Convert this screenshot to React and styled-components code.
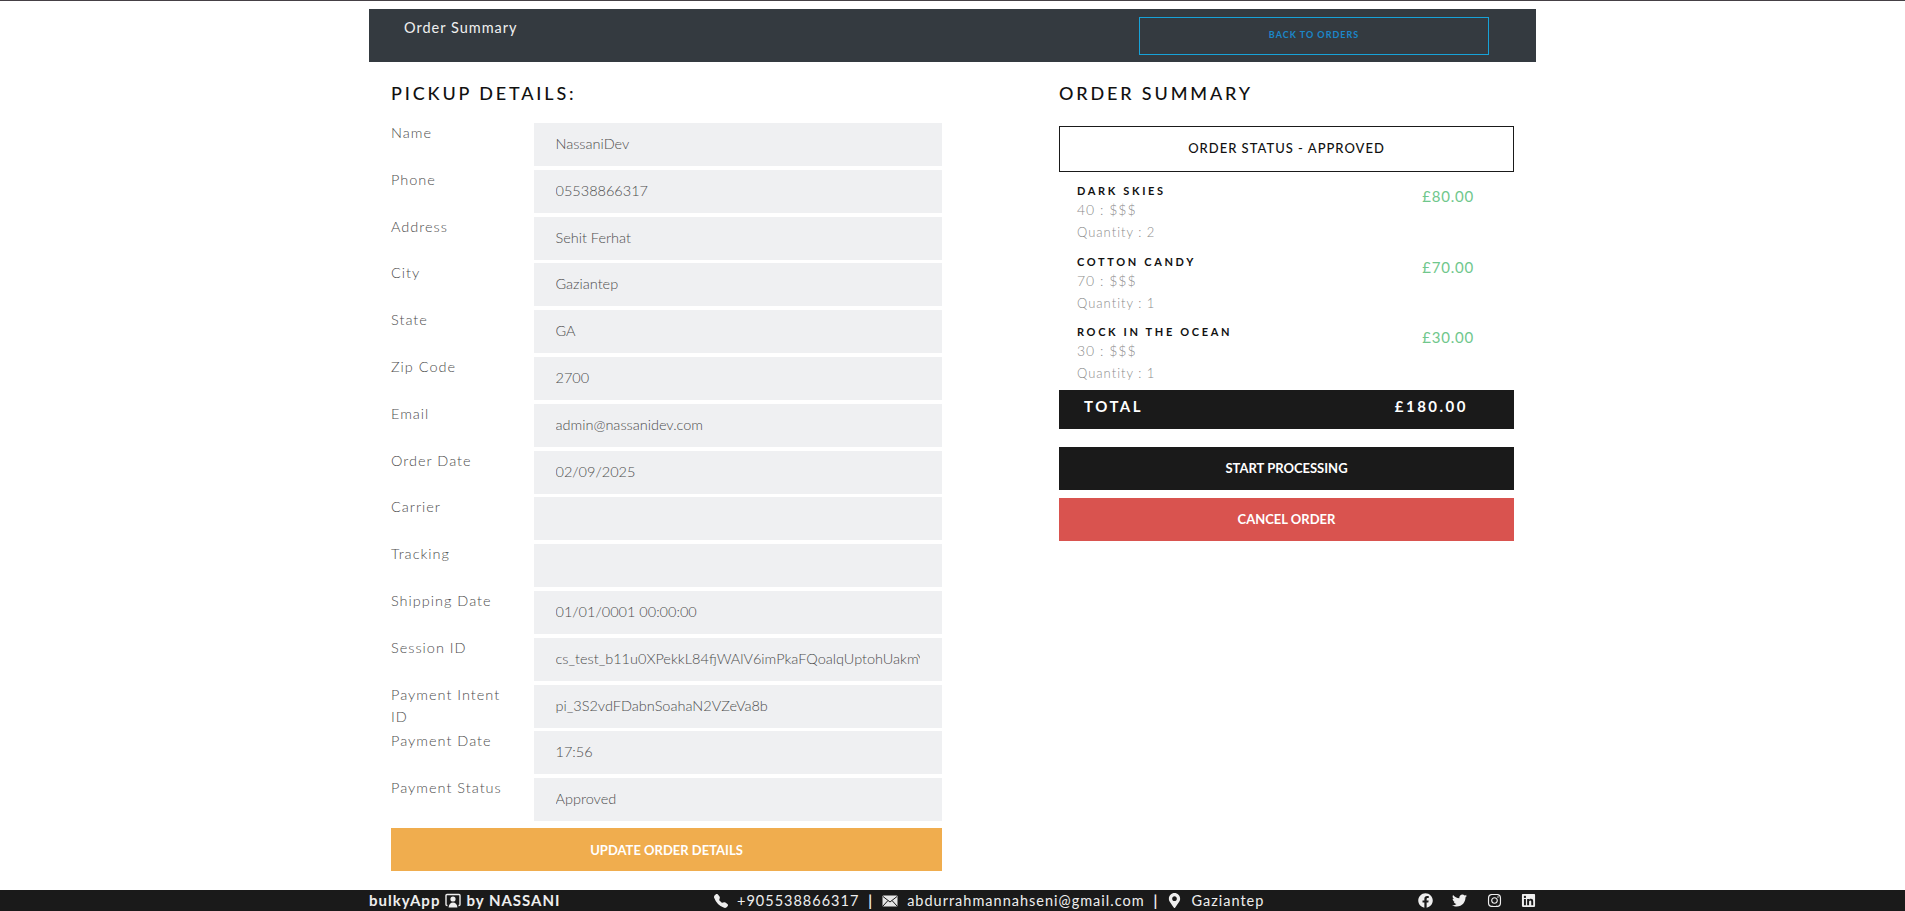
import React from 'react';
import styled, { createGlobalStyle } from 'styled-components';
import { FaFacebook, FaTwitter, FaInstagram, FaLinkedin, FaMapMarkerAlt } from 'react-icons/fa';
import { BsTelephoneFill } from 'react-icons/bs';

const GlobalStyle = createGlobalStyle`
  html, body {
    margin: 0;
    padding: 0;
    background: #ffffff;
  }
  body {
    font-family: "Lato", "Open Sans", sans-serif;
    overflow: hidden;
  }
`;

const Page = styled.div`
  display: flex;
  flex-direction: column;
  height: 911px;
  border-top: 1px solid #454045;
  box-sizing: border-box;
`;

const Container = styled.div`
  flex: 1;
  width: 1167px;
  margin: 8px auto 0;
`;

const Header = styled.div`
  display: flex;
  justify-content: space-between;
  height: 53px;
  padding: 8px 47px 7px 35px;
  box-sizing: border-box;
  background: #343a40;
`;

const HeaderTitle = styled.div`
  color: #f0f0f0;
  font-size: 14.5px;
  line-height: 21px;
  letter-spacing: 1px;
`;

const BackButton = styled.button`
  width: 350px;
  height: 38px;
  padding: 0 0 3px;
  background: transparent;
  border: 1px solid #17a2d8;
  color: #1b87c9;
  font-family: inherit;
  font-size: 9px;
  font-weight: 700;
  letter-spacing: 1px;
  text-transform: uppercase;
`;

const Columns = styled.div`
  display: grid;
  grid-template-columns: 551px 455px;
  column-gap: 117px;
  padding: 20px 0 0 22px;
`;

const SectionTitle = styled.h2`
  margin: 0;
  color: #111;
  font-size: 18px;
  font-weight: 500;
  line-height: 22px;
  letter-spacing: 2.85px;
  text-transform: uppercase;
`;

const Details = styled.div`
  display: flex;
  flex-direction: column;
  gap: 3.8px;
  margin-top: 19px;
`;

const DetailRow = styled.div`
  display: grid;
  grid-template-columns: 142.5px 1fr;
  height: 43px;
`;

const DetailLabel = styled.label`
  margin-top: -1px;
  padding-right: 15px;
  color: #4d4d4d;
  font-size: 14.5px;
  font-weight: 300;
  line-height: 22px;
  letter-spacing: 1px;
`;

const DetailInput = styled.input`
  width: 100%;
  height: 43px;
  padding: 0 22px 2px;
  box-sizing: border-box;
  background: #eff0f2;
  border: 0;
  outline: 0;
  color: #4d4d4d;
  font-family: inherit;
  font-size: 14.5px;
  font-weight: 300;
`;

const ActionButton = styled.button`
  display: block;
  width: 100%;
  height: 43px;
  border: 0;
  background: ${(p) => p.$bg};
  color: #fff;
  font-family: inherit;
  font-size: 13px;
  font-weight: 700;
  text-transform: uppercase;
`;

const UpdateButton = styled(ActionButton)`
  margin-top: 7px;
`;

const StatusBox = styled.div`
  height: 46px;
  margin-top: 22px;
  box-sizing: border-box;
  border: 1px solid #1a1a1a;
  color: #111;
  font-size: 13px;
  font-weight: 500;
  line-height: 42px;
  letter-spacing: 1px;
  text-align: center;
  text-transform: uppercase;
`;

const Items = styled.div`
  display: flex;
  flex-direction: column;
  padding: 10px 0 0 18px;
`;

const Item = styled.div`
  display: flex;
  justify-content: space-between;
  height: 70.7px;
  padding-right: 40px;

  &:last-child {
    height: 66.6px;
  }
`;

const ItemName = styled.div`
  color: #111;
  font-size: 11px;
  font-weight: 700;
  line-height: 18px;
  letter-spacing: 2.65px;
  text-transform: uppercase;
`;

const ItemMeta = styled.div`
  color: #8c8c8c;
  font-size: 14px;
  font-weight: 300;
  line-height: 20px;
  letter-spacing: 1px;
`;

const ItemQty = styled(ItemMeta)`
  margin-top: 2px;
  font-size: 13px;
`;

const ItemPrice = styled.div`
  margin-top: 3px;
  color: #70c78c;
  font-size: 15px;
  font-weight: 400;
  line-height: 22px;
  letter-spacing: 0.8px;
`;

const TotalBar = styled.div`
  display: flex;
  justify-content: space-between;
  height: 39px;
  padding: 6px 46px 0 25px;
  box-sizing: border-box;
  background: #1a1a1a;
  color: #fff;
  font-size: 15px;
  font-weight: 700;
  line-height: 20px;
  letter-spacing: 2.5px;
`;

const Actions = styled.div`
  display: flex;
  flex-direction: column;
  gap: 8px;
  margin-top: 18px;
`;

const Footer = styled.footer`
  height: 21px;
  background: #1a1a1a;
  color: #eee;
  font-size: 14.5px;
  line-height: 21px;
  letter-spacing: 1px;
`;

const FooterInner = styled.div`
  display: grid;
  grid-template-columns: 345px 1fr auto;
  width: 1167px;
  height: 21px;
  margin: 0 auto;
  overflow: hidden;
`;

const FooterGroup = styled.div`
  display: flex;
  align-items: center;
  white-space: nowrap;
`;

const Brand = styled(FooterGroup)`
  gap: 5px;
  font-size: 15px;
  font-weight: 700;
`;

const Contact = styled(FooterGroup)`
  gap: 9px;
`;

const Divider = styled.span`
  font-weight: 700;
`;

const Social = styled(FooterGroup)`
  gap: 19.5px;
  font-size: 15px;
`;

const PersonFrameIcon = () => (
  <svg width="16" height="16" viewBox="0 0 16 16" fill="none">
    <path d="M2.5 12.5H2a1 1 0 0 1-1-1V2.5a1 1 0 0 1 1-1h12a1 1 0 0 1 1 1v9a1 1 0 0 1-1 1h-.5" stroke="#eee" strokeWidth="1.4" />
    <circle cx="8" cy="6" r="2.6" fill="#eee" />
    <path d="M3.6 14.5c0-3 2-5 4.4-5s4.4 2 4.4 5z" fill="#eee" />
  </svg>
);

const MailIcon = () => (
  <svg width="16" height="12" viewBox="0 0 16 12">
    <rect x="0.5" y="0.5" width="15" height="11" rx="1" fill="#e6e6e6" />
    <path d="M1 1.5l7 5.5 7-5.5M1 11l5-5.5M15 11l-5-5.5" fill="none" stroke="#1a1a1a" strokeWidth="1" />
  </svg>
);

const details = [
  ['Name', 'NassaniDev'],
  ['Phone', '05538866317'],
  ['Address', 'Sehit Ferhat'],
  ['City', 'Gaziantep'],
  ['State', 'GA'],
  ['Zip Code', '2700'],
  ['Email', 'admin@nassanidev.com'],
  ['Order Date', '02/09/2025'],
  ['Carrier', ''],
  ['Tracking', ''],
  ['Shipping Date', '01/01/0001 00:00:00'],
  ['Session ID', 'cs_test_b11u0XPekkL84fjWAlV6imPkaFQoalqUptohUakmYbR7Ot2vK'],
  ['Payment Intent ID', 'pi_3S2vdFDabnSoahaN2VZeVa8b'],
  ['Payment Date', '17:56'],
  ['Payment Status', 'Approved'],
];

const items = [
  { name: 'Dark Skies', meta: '40 : $$$', qty: 2, price: '£80.00' },
  { name: 'Cotton Candy', meta: '70 : $$$', qty: 1, price: '£70.00' },
  { name: 'Rock in the Ocean', meta: '30 : $$$', qty: 1, price: '£30.00' },
];

function App() {
  return (
    <>
      <GlobalStyle />
      <Page>
        <Container>
          <Header>
            <HeaderTitle>Order Summary</HeaderTitle>
            <BackButton>Back to Orders</BackButton>
          </Header>
          <Columns>
            <div>
              <SectionTitle>Pickup Details:</SectionTitle>
              <Details>
                {details.map(([label, value]) => (
                  <DetailRow key={label}>
                    <DetailLabel>{label}</DetailLabel>
                    <DetailInput readOnly value={value} />
                  </DetailRow>
                ))}
              </Details>
              <UpdateButton $bg="#f0ad4e">Update Order Details</UpdateButton>
            </div>
            <div>
              <SectionTitle>Order Summary</SectionTitle>
              <StatusBox>Order Status - Approved</StatusBox>
              <Items>
                {items.map((item) => (
                  <Item key={item.name}>
                    <div>
                      <ItemName>{item.name}</ItemName>
                      <ItemMeta>{item.meta}</ItemMeta>
                      <ItemQty>Quantity : {item.qty}</ItemQty>
                    </div>
                    <ItemPrice>{item.price}</ItemPrice>
                  </Item>
                ))}
              </Items>
              <TotalBar>
                <span>TOTAL</span>
                <span>£180.00</span>
              </TotalBar>
              <Actions>
                <ActionButton $bg="#1a1a1a">Start Processing</ActionButton>
                <ActionButton $bg="#d9534f">Cancel Order</ActionButton>
              </Actions>
            </div>
          </Columns>
        </Container>
        <Footer>
          <FooterInner>
            <Brand>
              <span>bulkyApp</span>
              <PersonFrameIcon />
              <span>by NASSANI</span>
            </Brand>
            <Contact>
              <BsTelephoneFill size={14} />
              <span>+905538866317</span>
              <Divider>|</Divider>
              <MailIcon />
              <span>abdurrahmannahseni@gmail.com</span>
              <Divider>|</Divider>
              <FaMapMarkerAlt size={15} />
              <span>Gaziantep</span>
            </Contact>
            <Social>
              <FaFacebook />
              <FaTwitter />
              <FaInstagram />
              <FaLinkedin />
            </Social>
          </FooterInner>
        </Footer>
      </Page>
    </>
  );
}

export default App;
